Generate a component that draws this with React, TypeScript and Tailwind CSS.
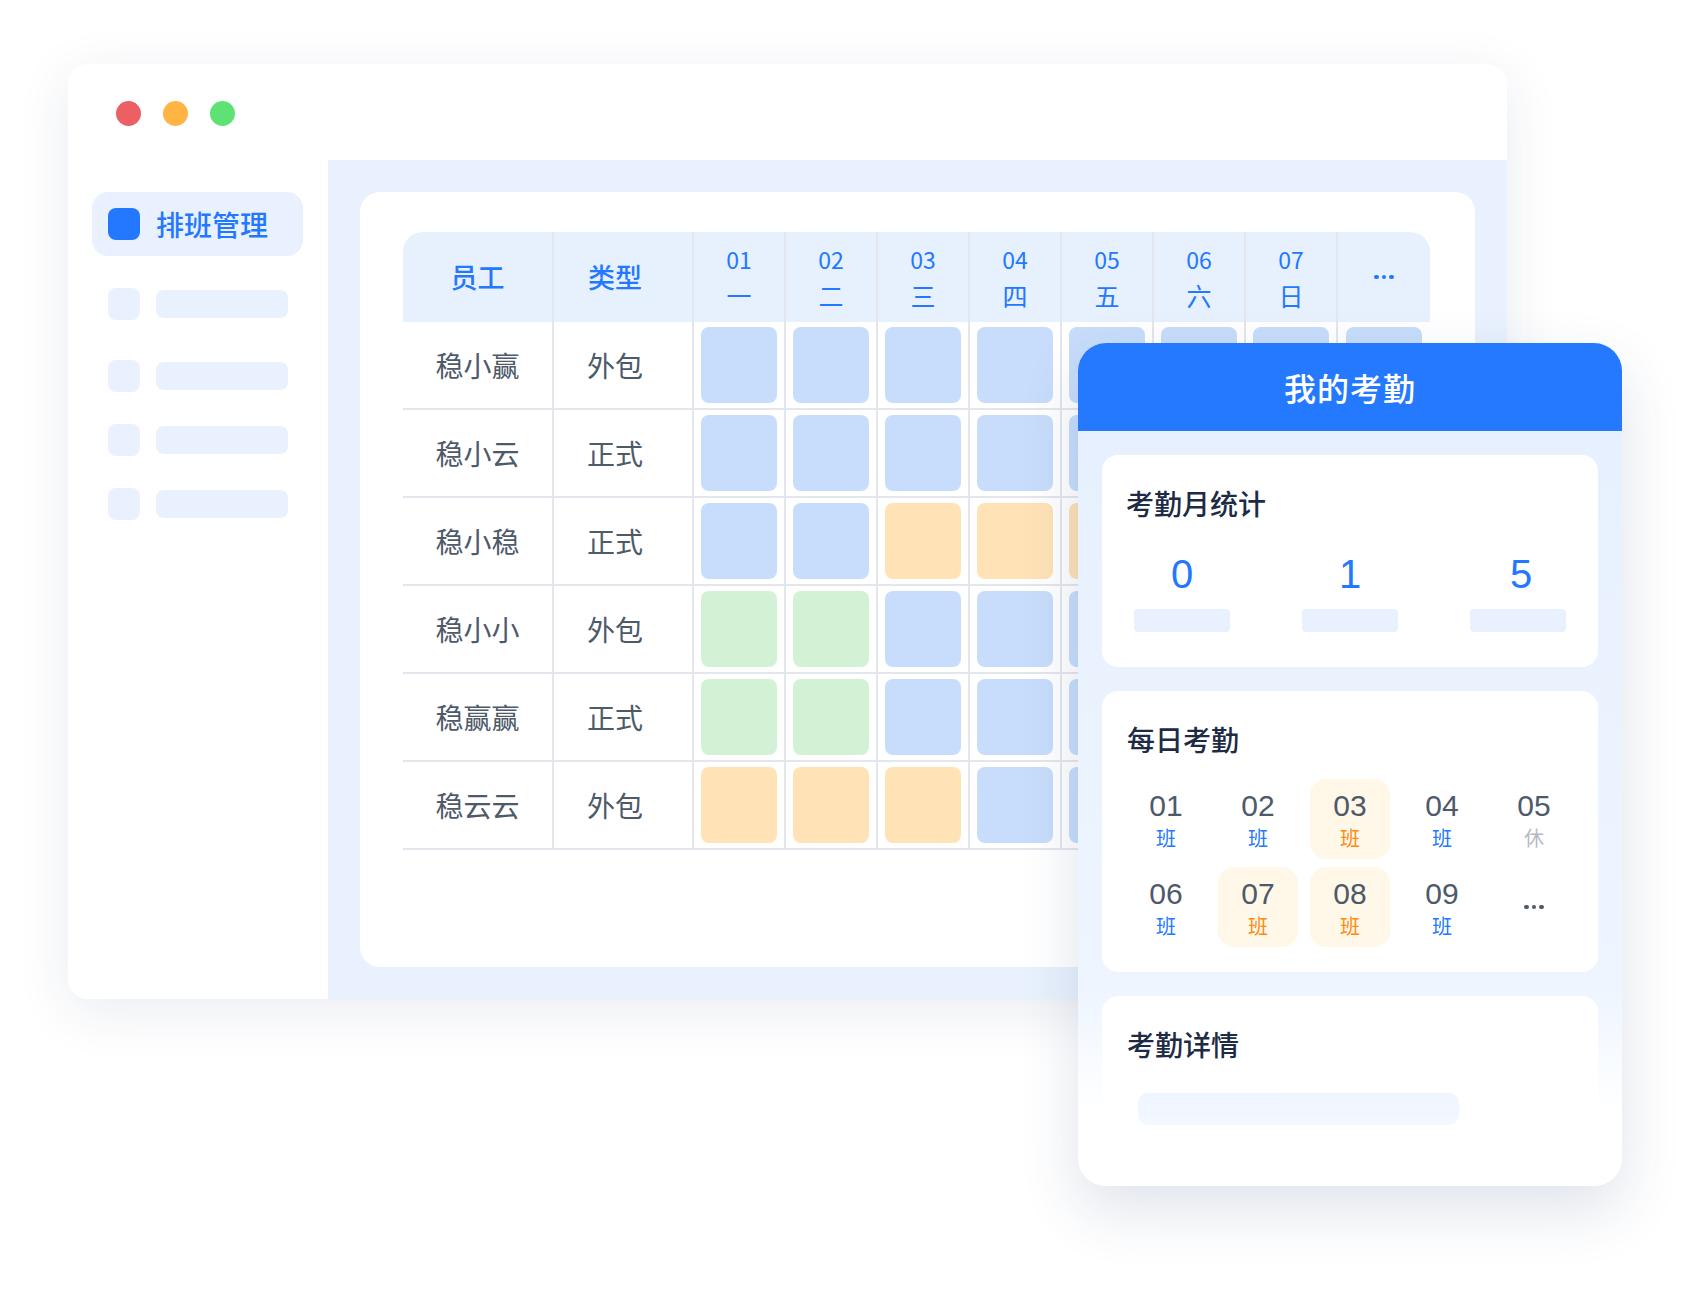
import React from "react";

type Tone = "B" | "G" | "O";

const toneClass: Record<Tone, string> = {
  B: "bg-[#c8ddfb]",
  G: "bg-[#d3f2d5]",
  O: "bg-[#ffe2b6]",
};

const days = [
  { d: "01", w: "一" },
  { d: "02", w: "二" },
  { d: "03", w: "三" },
  { d: "04", w: "四" },
  { d: "05", w: "五" },
  { d: "06", w: "六" },
  { d: "07", w: "日" },
];

const staff: { name: string; type: string; cells: string }[] = [
  { name: "稳小赢", type: "外包", cells: "BBBBBBBB" },
  { name: "稳小云", type: "正式", cells: "BBBBBBBB" },
  { name: "稳小稳", type: "正式", cells: "BBOOOBBB" },
  { name: "稳小小", type: "外包", cells: "GGBBBBBB" },
  { name: "稳赢赢", type: "正式", cells: "GGBBBBBB" },
  { name: "稳云云", type: "外包", cells: "OOOBBBBB" },
];

const daily = [
  { d: "01", t: "班", kind: "work" },
  { d: "02", t: "班", kind: "work" },
  { d: "03", t: "班", kind: "warn" },
  { d: "04", t: "班", kind: "work" },
  { d: "05", t: "休", kind: "rest" },
  { d: "06", t: "班", kind: "work" },
  { d: "07", t: "班", kind: "warn" },
  { d: "08", t: "班", kind: "warn" },
  { d: "09", t: "班", kind: "work" },
];

const Dots = ({ color }: { color: string }) => (
  <div className="flex items-center gap-[3px]">
    <span className={`w-[4.5px] h-[4.5px] rounded-full ${color}`} />
    <span className={`w-[4.5px] h-[4.5px] rounded-full ${color}`} />
    <span className={`w-[4.5px] h-[4.5px] rounded-full ${color}`} />
  </div>
);

const gridCols = "grid grid-cols-[151px_140px_repeat(8,92px)]";

const ScheduleTable = () => (
  <div className="w-[1027px]">
    <div className={`${gridCols} h-[90px] bg-[#e7f0fd] rounded-t-[20px] text-[#2478ff]`}>
      <div className="flex items-center justify-center border-r-2 border-[#e3e6ec] text-[27px] font-medium">员工</div>
      <div className="flex items-center justify-center pr-[16px] border-r-2 border-[#e3e6ec] text-[27px] font-medium">类型</div>
      {days.map((day) => (
        <div key={day.d} className="flex flex-col items-center justify-center border-r-2 border-[#e3e6ec]">
          <span className="text-[23px] leading-[30px]">{day.d}</span>
          <span className="mt-[5px] text-[25px] leading-[32px]">{day.w}</span>
        </div>
      ))}
      <div className="flex items-center justify-center">
        <Dots color="bg-[#2478ff]" />
      </div>
    </div>
    {staff.map((row) => (
      <div key={row.name} className={`${gridCols} h-[88px] border-b-2 border-[#e3e6ec] text-[#4e5969]`}>
        <div className="flex items-center justify-center border-r-2 border-[#e3e6ec] text-[28px]">{row.name}</div>
        <div className="flex items-center justify-center pr-[16px] border-r-2 border-[#e3e6ec] text-[28px]">{row.type}</div>
        {row.cells.split("").map((c, i) => (
          <div key={i} className={`flex items-center justify-center ${i < 7 ? "border-r-2 border-[#e3e6ec]" : ""}`}>
            <div className={`w-[76px] h-[76px] rounded-[8px] ${toneClass[c as Tone]}`} />
          </div>
        ))}
      </div>
    ))}
  </div>
);

const Sidebar = () => (
  <aside className="w-[260px] shrink-0 bg-white pt-[32px] px-[24px]">
    <div className="flex items-center gap-[16px] w-[211px] h-[64px] rounded-[16px] bg-[#e8f1fd] pl-[16px]">
      <span className="w-[32px] h-[32px] rounded-[8px] bg-[#2478ff]" />
      <span className="text-[28px] font-medium text-[#2478ff]">排班管理</span>
    </div>
    <div className="mt-[32px] flex flex-col gap-[32px] pl-[16px]">
      {[0, 1, 2, 3].map((i) => (
        <div key={i} className={`flex items-center gap-[16px] ${i === 1 ? "mt-[8px]" : ""}`}>
          <span className="w-[32px] h-[32px] rounded-[8px] bg-[#e8f1fd]" />
          <span className="w-[132px] h-[28px] rounded-[8px] bg-[#e8f1fd]" />
        </div>
      ))}
    </div>
  </aside>
);

const AttendancePanel = () => (
  <div className="absolute left-[1078px] top-[343px] w-[544px] h-[843px] rounded-[28px] overflow-hidden bg-white shadow-[0_24px_60px_rgba(30,55,110,0.14)]">
    <div className="h-[88px] bg-[#2479ff] flex items-center justify-center text-white text-[32px] font-medium tracking-[1px]">
      我的考勤
    </div>
    <div className="h-[755px] px-[24px] pt-[24px] bg-[linear-gradient(180deg,#e7f0fe_0%,#eef5ff_74%,#ffffff_90%)]">
      <section className="h-[212px] rounded-[16px] bg-white pt-[30px]">
        <h3 className="px-[24px] text-[28px] leading-[36px] font-medium text-[#1d2b45]">考勤月统计</h3>
        <div className="mt-[29px] px-[32px] flex justify-between">
          {["0", "1", "5"].map((n, i) => (
            <div key={n} className="w-[96px] flex flex-col items-center">
              <span
                className={`font-['Liberation_Sans',sans-serif] text-[40px] leading-[48px] text-[#2478ff] ${i === 2 ? "pl-[6px]" : ""}`}
              >
                {n}
              </span>
              <span className="mt-[11px] w-[96px] h-[23px] rounded-[4px] bg-[#e8f1fd]" />
            </div>
          ))}
        </div>
      </section>

      <section className="mt-[24px] h-[281px] rounded-[16px] bg-white pt-[30px] px-[24px]">
        <h3 className="pl-[1px] text-[28px] leading-[36px] font-medium text-[#1d2b45]">每日考勤</h3>
        <div className="mt-[22px] grid grid-cols-5 gap-x-[12px] gap-y-[8px]">
          {daily.map((item) => (
            <div
              key={item.d}
              className={`h-[80px] rounded-[16px] flex flex-col items-center justify-center pt-[3px] ${item.kind === "warn" ? "bg-[#fff7e8]" : ""}`}
            >
              <span className="font-['Liberation_Sans',sans-serif] text-[30px] leading-[34px] text-[#4e5969]">{item.d}</span>
              <span
                className={`mt-[1px] text-[20px] leading-[28px] ${
                  item.kind === "warn" ? "text-[#ff8a0d]" : item.kind === "rest" ? "text-[#b4bac4]" : "text-[#2478ff]"
                }`}
              >
                {item.t}
              </span>
            </div>
          ))}
          <div className="h-[80px] flex items-center justify-center">
            <Dots color="bg-[#4e5969]" />
          </div>
        </div>
      </section>

      <section className="mt-[24px] h-[200px] rounded-[16px] bg-white pt-[30px] pl-[25px]">
        <h3 className="text-[28px] leading-[36px] font-medium text-[#1d2b45]">考勤详情</h3>
        <div className="mt-[31px] ml-[11px] w-[321px] h-[32px] rounded-[10px] bg-[linear-gradient(180deg,#eef5fe,#f4f8ff)]" />
      </section>
    </div>
  </div>
);

export default function App() {
  return (
    <div className="relative w-[1699px] h-[1293px] overflow-hidden bg-white font-['Noto_Sans_CJK_SC',sans-serif]">
      <div className="ml-[68px] mt-[64px] w-[1439px] h-[935px] rounded-[20px] bg-white overflow-hidden flex flex-col shadow-[0_12px_56px_rgba(25,45,95,0.09)]">
        <div className="h-[96px] shrink-0 flex items-start gap-[22px] pl-[48px] pt-[37px]">
          <span className="w-[25px] h-[25px] rounded-full bg-[#ec5f62]" />
          <span className="w-[25px] h-[25px] rounded-full bg-[#ffb444]" />
          <span className="w-[25px] h-[25px] rounded-full bg-[#5fe274]" />
        </div>
        <div className="flex flex-1 min-h-0">
          <Sidebar />
          <main className="flex-1 bg-[#e8f1fd] p-[32px]">
            <div className="h-full rounded-[20px] bg-white pl-[43px] pt-[40px]">
              <ScheduleTable />
            </div>
          </main>
        </div>
      </div>
      <AttendancePanel />
    </div>
  );
}
